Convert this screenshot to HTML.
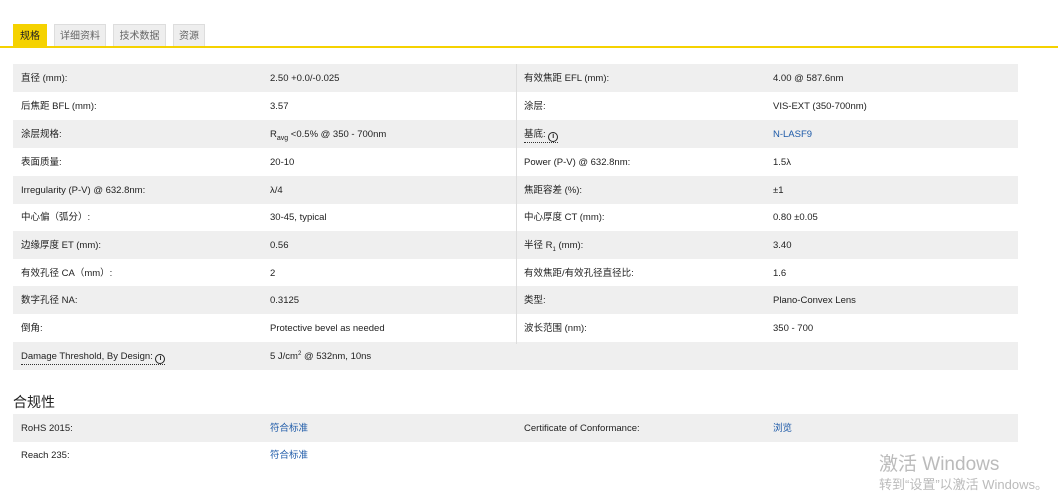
<!DOCTYPE html><html><head><meta charset="utf-8"><style>
body{margin:0;width:1058px;height:491px;background:#fff;font-family:"Liberation Sans","Noto Sans CJK SC",sans-serif;color:#222;position:relative;overflow:hidden;font-size:9.5px}
.tab{position:absolute;top:24px;height:23px;line-height:24px;font-size:10px;background:#eee;border:1px solid #ddd;border-bottom:none;color:#666;box-sizing:border-box;white-space:nowrap;text-align:center}
.line{position:absolute;left:0;right:0;top:46px;height:2px;background:#f5d200}
.row{position:absolute;left:13px;width:1005px;height:28px;line-height:29px}
.g{background:#efefef}
.row>span{position:absolute;top:0;white-space:nowrap}
sub,sup{line-height:0}
.a{left:8px}.b{left:257px}.c{left:511px}.d{left:760px}
.vl{position:absolute;left:516px;top:64px;width:1px;height:280px;background:#ddd}
.lk{color:#1d5aa8}
.i{display:inline-block;width:8px;height:8px;border:1.3px solid #222;border-radius:50%;font-size:7px;line-height:8px;text-align:center;font-weight:bold;vertical-align:-1px}
.u{border-bottom:1px dotted #333;line-height:12px;display:inline-block}
h3{position:absolute;left:13px;top:392px;margin:0;font-size:14px;font-weight:normal;color:#222}
.wm{position:absolute;left:879px;color:#bbb;white-space:nowrap}
</style></head><body>
<div class="tab" style="left:13px;width:34px;background:#f5d200;border-color:#f5d200;color:#222">规格</div>
<div class="tab" style="left:54px;width:52px">详细资料</div>
<div class="tab" style="left:113px;width:53px">技术数据</div>
<div class="tab" style="left:173px;width:32px">资源</div>
<div class="line"></div>
<div class="row g" style="top:64px"><span class="a">直径 (mm):</span><span class="b">2.50 +0.0/-0.025</span><span class="c">有效焦距 EFL (mm):</span><span class="d">4.00 @ 587.6nm</span></div>
<div class="row" style="top:92px"><span class="a">后焦距 BFL (mm):</span><span class="b">3.57</span><span class="c">涂层:</span><span class="d">VIS-EXT (350-700nm)</span></div>
<div class="row g" style="top:120px"><span class="a">涂层规格:</span><span class="b">R<sub style="font-size:7px">avg</sub> &lt;0.5% @ 350 - 700nm</span><span class="c"><span class="u">基底: <span class="i">i</span></span></span><span class="d lk">N-LASF9</span></div>
<div class="row" style="top:148px"><span class="a">表面质量:</span><span class="b">20-10</span><span class="c">Power (P-V) @ 632.8nm:</span><span class="d">1.5λ</span></div>
<div class="row g" style="top:176px"><span class="a">Irregularity (P-V) @ 632.8nm:</span><span class="b">λ/4</span><span class="c">焦距容差 (%):</span><span class="d">±1</span></div>
<div class="row" style="top:203px"><span class="a">中心偏（弧分）:</span><span class="b">30-45, typical</span><span class="c">中心厚度 CT (mm):</span><span class="d">0.80 ±0.05</span></div>
<div class="row g" style="top:231px"><span class="a">边缘厚度 ET (mm):</span><span class="b">0.56</span><span class="c">半径 R<sub style="font-size:6px">1</sub> (mm):</span><span class="d">3.40</span></div>
<div class="row" style="top:259px"><span class="a">有效孔径 CA（mm）:</span><span class="b">2</span><span class="c">有效焦距/有效孔径直径比:</span><span class="d">1.6</span></div>
<div class="row g" style="top:286px"><span class="a">数字孔径 NA:</span><span class="b">0.3125</span><span class="c">类型:</span><span class="d">Plano-Convex Lens</span></div>
<div class="row" style="top:314px"><span class="a">倒角:</span><span class="b">Protective bevel as needed</span><span class="c">波长范围 (nm):</span><span class="d">350 - 700</span></div>
<div class="row g" style="top:342px"><span class="a"><span class="u">Damage Threshold, By Design: <span class="i">i</span></span></span><span class="b">5 J/cm<sup style="font-size:6px">2</sup> @ 532nm, 10ns</span></div>
<div class="vl"></div>
<h3>合规性</h3>
<div class="row g" style="top:414px"><span class="a">RoHS 2015:</span><span class="b lk">符合标准</span><span class="c">Certificate of Conformance:</span><span class="d lk">浏览</span></div>
<div class="row" style="top:441px"><span class="a">Reach 235:</span><span class="b lk">符合标准</span></div>
<div class="wm" style="top:449px;font-size:19px">激活 Windows</div>
<div class="wm" style="top:474px;font-size:13px">转到“设置”以激活 Windows。</div>
</body></html>
